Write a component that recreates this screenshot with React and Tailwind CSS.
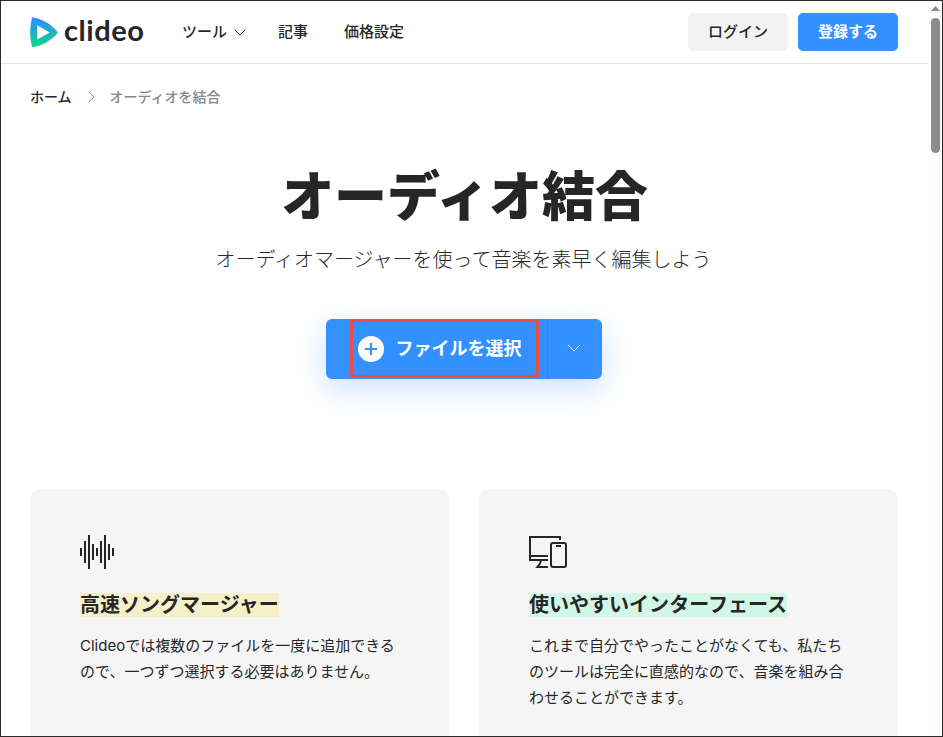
import React from "react";

function Logo() {
  return (
    <a className="flex items-center">
      <svg width="28" height="31" viewBox="0 0 28 31" className="shrink-0">
        <defs>
          <linearGradient id="mark" x1="0" y1="0" x2="0" y2="1">
            <stop offset="0.05" stopColor="#318fff" />
            <stop offset="0.95" stopColor="#0ad58b" />
          </linearGradient>
        </defs>
        <path
          fillRule="evenodd"
          fill="url(#mark)"
          d="M2.2 .3C12 1.6 21.5 7 28 15.5 21.5 23.5 12 29 2.2 30.3-.5 20.500-.5 10 2.200 .3ZM7.200 8.300V22.400L19.800 15.400Z"
        />
      </svg>
      <span className="-mt-[5px] ml-[6px] h-[38px] w-[83px] whitespace-nowrap font-[Lato,sans-serif] text-[29px] font-bold leading-[38px] tracking-[0.55px]">
        clideo
      </span>
    </a>
  );
}

function Header() {
  return (
    <header className="flex h-[63px] items-center border-b border-[#e6e6e6] pl-[29px] pr-[30px] text-[15px] font-medium">
      <Logo />
      <nav className="ml-[35px] flex items-center leading-6">
        <span>ツール</span>
        <svg width="12" height="7" viewBox="0 0 12 7" className="ml-[7px]" fill="none" stroke="currentColor">
          <path d="M.7 .8L6 6 11.300 .8" />
        </svg>
        <span className="ml-8">記事</span>
        <span className="ml-9">価格設定</span>
      </nav>
      <div className="ml-auto flex gap-[10px]">
        <button className="h-[38px] w-[100px] rounded-[5px] bg-[#f2f2f2]">ログイン</button>
        <button className="h-[38px] w-[100px] rounded-[5px] bg-[#3290ff] font-bold text-white">登録する</button>
      </div>
    </header>
  );
}

function WaveIcon() {
  return (
    <svg width="34" height="34" viewBox="0 0 34 34" stroke="#262628" strokeWidth="2">
      <path d="M1 13v8M5 6v22M9 0v34M13 9v16M17 13v8M21 6v22M25 0v34M29 9v16M33 13v8" />
    </svg>
  );
}

function DevicesIcon() {
  return (
    <svg width="38" height="34" viewBox="0 0 38 34" fill="none" stroke="#262628" strokeWidth="2">
      <path d="M31 5V2H1V25H19M1 21H19M12 25C11.800 28 10.500 30 8.500 32H19" />
      <rect x="22" y="8" width="15" height="24" rx="2" />
      <path d="M27 11h5" />
    </svg>
  );
}

function Card({ icon, title, mark, children }) {
  return (
    <article className="h-[300px] w-[419px] shrink-0 rounded-[10px] bg-[#f5f5f5] px-[50px] pt-[46px]">
      <div className="h-[34px]">{icon}</div>
      <h2 className="mt-6 flex h-6 text-[20px] font-bold leading-6 tracking-[0.02px]">
        <span className={mark}>{title}</span>
      </h2>
      <p className="mt-[16px] whitespace-nowrap text-[15px] leading-[26px]">{children}</p>
    </article>
  );
}

export default function App() {
  return (
    <div
      lang="ja"
      className="flex h-[737px] w-[943px] overflow-hidden border border-[#2b2a2b] bg-white font-[Inter,'Noto_Sans_CJK_JP',sans-serif] text-[#262628]"
    >
      <div className="w-[927px] shrink-0">
        <Header />
        <div className="ml-[29px] mt-[21px] flex h-6 items-center text-[14px] font-medium leading-6">
          <span>ホーム</span>
          <svg width="7" height="12" viewBox="0 0 7 12" className="ml-[16px] mr-[15px]" fill="none" stroke="#999">
            <path d="M1 1L6 6 1 11" />
          </svg>
          <span className="text-[#87878b]">オーディオを結合</span>
        </div>
        <main className="mr-[2px]">
          <h1 className="ml-[2px] mt-[52px] h-[72px] text-center text-[53px] font-black leading-[72px] tracking-[-0.1px]">オーディオ結合</h1>
          <p className="mt-[12px] text-center text-[20px] font-light leading-[30px]">
            オーディオマージャーを使って音楽を素早く編集しよう
          </p>
          <div className="mx-auto mt-[44px] flex h-[60px] w-[276px] rounded-[6px] bg-[#3290ff] text-white shadow-[0_10px_30px_rgba(50,144,255,0.25)]">
            <div className="ml-6 h-[59px] w-[189px] rounded-[3px] border-[3px] border-[#ee4b45]">
              <div className="flex h-full items-center pl-[5px]">
                <svg width="26" height="26" viewBox="0 0 26 26" className="shrink-0">
                  <circle cx="13" cy="13" r="13" fill="#fff" />
                  <path d="M13 7v12M7 13h12" stroke="#3290ff" strokeWidth="2" />
                </svg>
                <span className="ml-3 whitespace-nowrap text-[18px] font-bold">ファイルを選択</span>
              </div>
            </div>
            <div className="ml-2 flex w-[55px] items-center justify-center border-l border-[#2d82e6]">
              <svg width="14" height="8" viewBox="0 0 14 8" className="mb-[2px] mr-[2px]" fill="none" stroke="#fff">
                <path d="M1 1L7 7 13 1" />
              </svg>
            </div>
          </div>
          <section className="ml-[29px] mt-[110px] flex gap-[30px]">
            <Card icon={<WaveIcon />} title="高速ソングマージャー" mark="bg-[#f6f0c9]">
              Clideoでは複数のファイルを一度に追加できる<br />
              ので、一つずつ選択する必要はありません。
            </Card>
            <Card icon={<DevicesIcon />} title="使いやすいインターフェース" mark="bg-[#d2f7e6]">
              これまで自分でやったことがなくても、私たち<br />
              のツールは完全に直感的なので、音楽を組み合<br />
              わせることができます。
            </Card>
          </section>
        </main>
      </div>
      <aside className="flex w-[14px] shrink-0 flex-col items-center bg-[#fcfcfc]">
        <svg width="9" height="5" viewBox="0 0 9 5" className="ml-px mt-[5px]">
          <path d="M0 5L4.500 0 9 5Z" fill="#8b8b8b" />
        </svg>
        <div className="ml-px mt-[7px] h-[135px] w-[9px] rounded-full bg-[#8b8b8b]" />
      </aside>
    </div>
  );
}
